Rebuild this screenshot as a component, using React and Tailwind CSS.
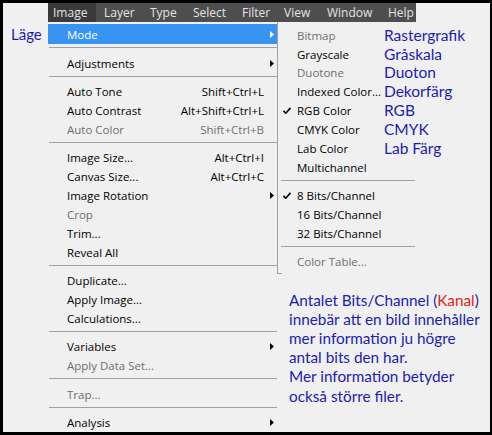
// menubar items: [label, width, left padding] taken from the screenshot
const menubar = [
  ["Image", 48, 5],
  ["Layer", 45, 8],
  ["Type", 42, 9],
  ["Select", 49, 10],
  ["Filter", 43, 10],
  ["View", 42, 9],
  ["Window", 62, 10],
  ["Help", 37, 9],
];

// s = separator, d = disabled, sc = shortcut, sub = has submenu arrow
const menu = [
  { l: "Mode", active: true, sub: true },
  { s: true },
  { l: "Adjustments", sub: true },
  { s: true },
  { l: "Auto Tone", sc: "Shift+Ctrl+L" },
  { l: "Auto Contrast", sc: "Alt+Shift+Ctrl+L" },
  { l: "Auto Color", sc: "Shift+Ctrl+B", d: true },
  { s: true },
  { l: "Image Size...", sc: "Alt+Ctrl+I" },
  { l: "Canvas Size...", sc: "Alt+Ctrl+C" },
  { l: "Image Rotation", sub: true },
  { l: "Crop", d: true },
  { l: "Trim..." },
  { l: "Reveal All" },
  { s: true },
  { l: "Duplicate..." },
  { l: "Apply Image..." },
  { l: "Calculations..." },
  { s: true },
  { l: "Variables", sub: true },
  { l: "Apply Data Set...", d: true },
  { s: true },
  { l: "Trap...", d: true },
  { s: true },
  { l: "Analysis", sub: true },
];

const submenu = [
  { l: "Bitmap", d: true, t: "Rastergrafik" },
  { l: "Grayscale", t: "Gråskala" },
  { l: "Duotone", d: true, t: "Duoton" },
  { l: "Indexed Color...", t: "Dekorfärg" },
  { l: "RGB Color", check: true, t: "RGB" },
  { l: "CMYK Color", t: "CMYK" },
  { l: "Lab Color", t: "Lab Färg" },
  { l: "Multichannel" },
  { s: true },
  { l: "8 Bits/Channel", check: true },
  { l: "16 Bits/Channel" },
  { l: "32 Bits/Channel" },
  { s: true },
  { l: "Color Table...", d: true },
];

const Arrow = ({ white }) => (
  <svg width="4" height="7" viewBox="0 0 4 7">
    <path d="M0 0 L4 3.5 L0 7 Z" fill={white ? "#ffffff" : "#000000"} />
  </svg>
);

const Check = () => (
  <svg width="8" height="7" viewBox="0 0 8 7">
    <path d="M0.5 3.8 L2.8 6.2 L7.5 0.8" stroke="#000" strokeWidth="1.6" fill="none" />
  </svg>
);

const Sep = ({ className }) => (
  <div className={`h-[9.5px] pt-[3px] ${className}`}>
    <div className="h-px bg-[#a0a0a0]" />
  </div>
);

export default function App() {
  return (
    <div className="w-[492px] h-[435px] bg-black pt-[3px] pl-[3px] pr-[2px] pb-[3px] font-['Open_Sans',sans-serif]">
      <div className="h-full bg-[#f0f0f0] flex flex-col overflow-hidden">
        {/* menubar */}
        <div className="flex h-[20px]">
          <div className="w-[45px] shrink-0" />
          <div className="flex bg-[#4e4e4e] text-[12px] text-[#e4e4e4] items-center h-full">
            {menubar.map(([m, w, p], i) => (
              <div
                key={m}
                style={{ width: w, paddingLeft: p }}
                className={`h-full flex items-center whitespace-nowrap shrink-0 ${i === 0 ? "bg-[#3a3a3a]" : ""}`}
              >
                {m}
              </div>
            ))}
          </div>
        </div>

        <div className="flex">
          {/* Läge label */}
          <div className="w-[45px] shrink-0 pt-[2px] pl-[8px]">
            <div className="h-[20px] flex items-center text-[15px] text-[#1c1cb0] font-['Lato',sans-serif]">Läge</div>
          </div>

          {/* main menu */}
          <div className="w-[229px] shrink-0 pt-[2px] text-[11.5px] text-black">
            {menu.map((m, i) =>
              m.s ? (
                <Sep key={i} className="pl-px" />
              ) : (
                <div
                  key={i}
                  className={`flex items-center pl-[19px] ${m.active ? "h-[20px] bg-[#3794f2] text-white" : "h-[18.9px]"} ${m.d ? "text-[#6f6f6f]" : ""}`}
                >
                  <span className="flex-1 whitespace-nowrap">{m.l}</span>
                  {m.sc && <span className="whitespace-nowrap">{m.sc}</span>}
                  <span className="w-[13px] shrink-0 pl-[6px] flex items-center">{m.sub && <Arrow white={m.active} />}</span>
                </div>
              )
            )}
          </div>

          {/* right column: submenu + note */}
          <div className="flex flex-col">
            <div className="w-[140px] border-l border-[#a0a0a0] pt-[3.5px] text-[11.5px]">
              {submenu.map((m, i) =>
                m.s ? (
                  <Sep key={i} className="pl-[3px] pr-[2px]" />
                ) : (
                  <div key={i} className={`flex items-center h-[18.9px] whitespace-nowrap ${m.d ? "text-[#6f6f6f]" : "text-black"}`}>
                    <span className="w-[19px] shrink-0 pl-[5px] flex items-center">{m.check && <Check />}</span>
                    <span className="w-[87px] shrink-0">{m.l}</span>
                    {m.t && <span className="shrink-0 text-[15.5px] text-[#1c1cb0] font-['Lato',sans-serif]">{m.t}</span>}
                  </div>
                )
              )}
              <div className="h-[1px]" />
            </div>
            <div className="h-px w-[5px] bg-[#a0a0a0]" />

            <div className="pl-[12px] mt-[17px] text-[15.3px] leading-[19.2px] text-[#1c1cb0] font-['Lato',sans-serif] whitespace-nowrap">
              <p>
                Antalet Bits/Channel (<span className="text-[#e3201c]">Kanal</span>)
              </p>
              <p>innebär att en bild innehåller</p>
              <p>mer information ju högre</p>
              <p>antal bits den har.</p>
              <p>Mer information betyder</p>
              <p>också större filer.</p>
            </div>
          </div>
        </div>
      </div>
    </div>
  );
}
